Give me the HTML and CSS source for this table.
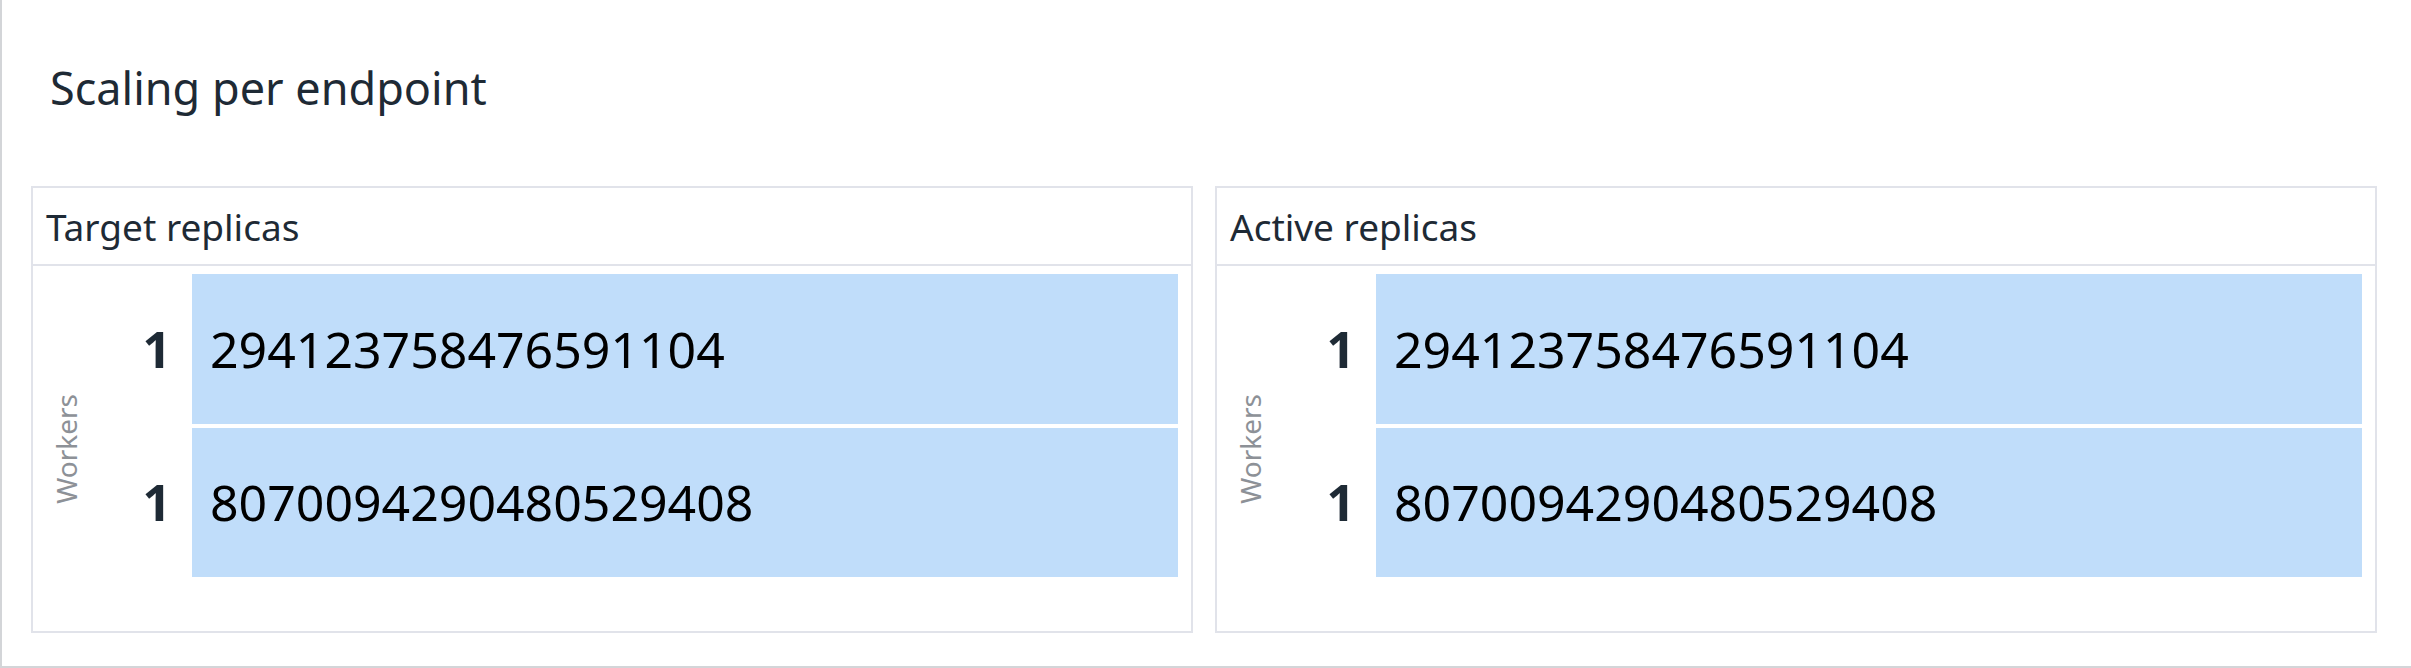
FILE: index.html
```html
<!DOCTYPE html>
<html>
<head>
<meta charset="utf-8">
<link rel="stylesheet" href="styles.css">
</head>
<body>
<div class="panel">
  <div class="panel-title">Scaling per endpoint</div>
  <div class="cards">
    <section class="card">
      <div class="card-head">Target replicas</div>
      <div class="chart">
        <div class="axis-title"><span>Workers</span></div>
        <div class="rows">
          <div class="row"><div class="tick">1</div><div class="bar">294123758476591104</div></div>
          <div class="row"><div class="tick">1</div><div class="bar">8070094290480529408</div></div>
        </div>
      </div>
    </section>
    <section class="card">
      <div class="card-head">Active replicas</div>
      <div class="chart">
        <div class="axis-title"><span>Workers</span></div>
        <div class="rows">
          <div class="row"><div class="tick">1</div><div class="bar">294123758476591104</div></div>
          <div class="row"><div class="tick">1</div><div class="bar">8070094290480529408</div></div>
        </div>
      </div>
    </section>
  </div>
</div>
</body>
</html>
```
FILE: styles.css
```css
html, body {
  margin: 0;
  padding: 0;
  background: #ffffff;
}
body {
  font-family: "Noto Sans", "Open Sans", sans-serif;
}
.panel {
  width: 2411px;
  height: 668px;
  box-sizing: border-box;
  border-left: 2px solid #d3d5d8;
  border-bottom: 2px solid #d3d5d8;
  background: #ffffff;
}
.panel-title {
  padding: 57px 0 68px 48px;
  font-size: 45px;
  line-height: 61px;
  color: #1e2a35;
}
.cards {
  display: flex;
  gap: 22px;
  padding: 0 34px 0 29px;
}
.card {
  flex: 1;
  min-width: 0;
  border: 2px solid #e1e3ea;
}
.card-head {
  height: 76px;
  display: flex;
  align-items: center;
  padding-left: 13px;
  font-size: 37px;
  color: #1e2a35;
  border-bottom: 2px solid #e1e3ea;
}
.chart {
  height: 365px;
  display: flex;
}
.axis-title {
  width: 66px;
  display: flex;
  align-items: center;
  justify-content: center;
}
.axis-title span {
  writing-mode: vertical-rl;
  transform: rotate(180deg);
  font-size: 28px;
  color: #8d9197;
  line-height: 1;
}
.rows {
  flex: 1;
  display: flex;
  flex-direction: column;
  gap: 4px;
  padding: 8px 13px 54px 0;
}
.row {
  flex: 1;
  display: flex;
}
.tick {
  width: 93px;
  box-sizing: border-box;
  padding-right: 21px;
  display: flex;
  align-items: center;
  justify-content: flex-end;
  font-size: 50px;
  font-weight: 700;
  color: #1e2a35;
}
.bar {
  flex: 1;
  display: flex;
  align-items: center;
  padding-left: 18px;
  background: #c0ddfa;
  font-size: 50px;
  color: #000000;
}
```
